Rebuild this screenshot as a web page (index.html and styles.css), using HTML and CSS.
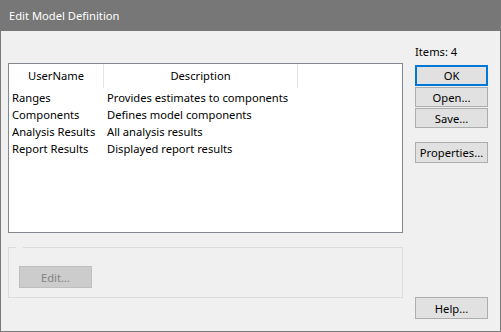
FILE: index.html
```html
<!DOCTYPE html>
<html lang="en">
<head>
	<meta charset="UTF-8">
	<title>Edit Model Definition</title>
	<link rel="stylesheet" href="styles.css">
</head>
<body>
	<div class="window">
		<div class="titlebar">Edit Model Definition</div>
		<div class="content">
			<div class="main">
				<div class="list">
					<div class="list-head">
						<div class="hcell">UserName</div>
						<div class="hcell">Description</div>
						<div class="hcell last"></div>
					</div>
					<div class="row"><span>Ranges</span><span>Provides estimates to components</span></div>
					<div class="row"><span>Components</span><span>Defines model components</span></div>
					<div class="row"><span>Analysis Results</span><span>All analysis results</span></div>
					<div class="row"><span>Report Results</span><span>Displayed report results</span></div>
				</div>
				<fieldset class="group">
					<legend></legend>
					<button class="btn disabled" disabled>Edit...</button>
				</fieldset>
			</div>
			<div class="side">
				<div class="count">Items: 4</div>
				<button class="btn default">OK</button>
				<button class="btn small">Open...</button>
				<button class="btn small">Save...</button>
				<button class="btn props">Properties...</button>
				<button class="btn help">Help...</button>
			</div>
		</div>
	</div>
</body>
</html>
```

FILE: styles.css
```css
body{
	margin: 0;
	font-family: "Noto Sans", "Open Sans", sans-serif;
	font-size: 11.2px;
	color: #000;
}
.window{
	width: 501px;
	height: 332px;
	box-sizing: border-box;
	border: 1px solid #7a7a7a;
	border-top: 0;
	background: #f0f0f0;
	display: flex;
	flex-direction: column;
}
.titlebar{
	height: 31px;
	margin: 0 -1px;
	background: #777777;
	color: #fff;
	line-height: 31px;
	padding-left: 9px;
	flex: none;
}
.content{
	flex: 1;
	display: flex;
}
/* left part: list and group box */
.main{
	width: 395px;
	padding-left: 7px;
	padding-top: 32px;
}
.list{
	height: 170px;
	box-sizing: border-box;
	border: 1px solid #828790;
	background: #fff;
}
.list-head{
	display: grid;
	grid-template-columns: 95px 194px 1fr;
	height: 24px;
	line-height: 24px;
}
.hcell{
	text-align: center;
	border-right: 1px solid #e5e5e5;
}
.hcell.last{
	border-right: 0;
}
.row{
	display: grid;
	grid-template-columns: 95px 1fr;
	height: 17px;
	line-height: 17px;
	white-space: nowrap;
}
.list-head + .row{
	margin-top: 1px;
}
.row span{
	padding-left: 3px;
}
.group{
	margin: 14px 0 0;
	height: 51px;
	box-sizing: border-box;
	border: 1px solid #dcdcdc;
	padding: 0 0 0 10px;
	min-width: 0;
}
.group legend{
	width: 7px;
	height: 1px;
	padding: 0;
	margin-left: -3px;
	font-size: 0;
	line-height: 0;
}
/* buttons */
.btn{
	display: block;
	width: 73px;
	height: 21px;
	padding: 0;
	box-sizing: border-box;
	font-family: inherit;
	font-size: 11.2px;
	color: #000;
	background: #e1e1e1;
	border: 1px solid #adadad;
}
.btn.default{
	border: 2px solid #0078d7;
}
.btn.disabled{
	margin-top: 18px;
	height: 22px;
	background: #cccccc;
	border-color: #bfbfbf;
	color: #838383;
}
.side{
	margin-left: 12px;
	padding-top: 13px;
	padding-bottom: 12px;
	display: flex;
	flex-direction: column;
}
.count{
	height: 16px;
	line-height: 16px;
	margin-bottom: 5px;
}
.btn.small{
	height: 20px;
	margin-top: 1px;
}
.btn.props{
	margin-top: 14px;
}
.btn.help{
	margin-top: auto;
	height: 22px;
}
```
